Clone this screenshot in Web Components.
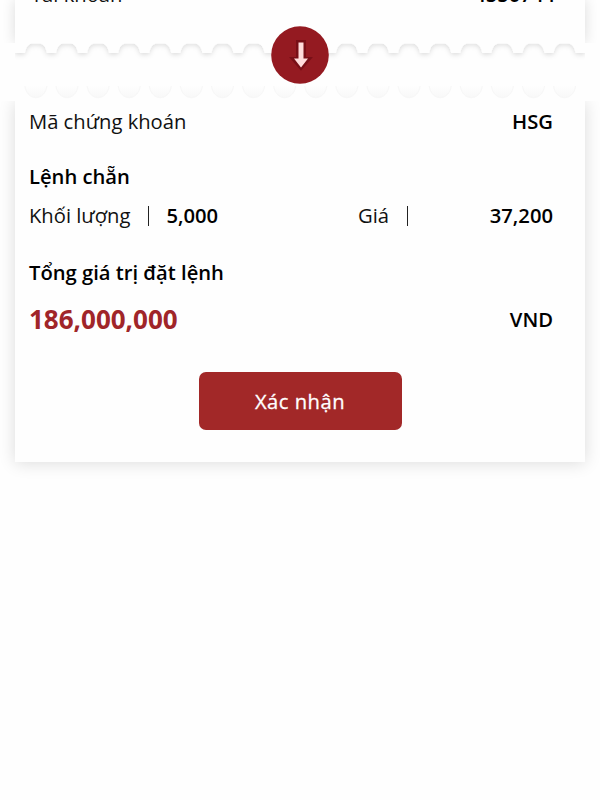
<!DOCTYPE html>
<html lang="vi">
<head>
<meta charset="utf-8">
<title>Xác nhận lệnh</title>
<style>
    body {
        margin: 0;
        height: 800px;
        overflow: hidden;
        background: #fefefe;
        color: #111;
        font-family: "Open Sans", "Noto Sans", sans-serif;
        font-size: 20.2px;
    }
</style>
</head>
<body>
<order-ticket>
    <ticket-row slot="account">
        <span>Tài khoản</span>
        <b slot="value">4550744</b>
    </ticket-row>
    <ticket-row>
        <span>Mã chứng khoán</span>
        <b slot="value">HSG</b>
    </ticket-row>
    <ticket-heading>Lệnh chẵn</ticket-heading>
    <order-quote>
        <span slot="volume-label">Khối lượng</span>
        <span slot="volume">5,000</span>
        <span slot="price-label">Giá</span>
        <span slot="price">37,200</span>
    </order-quote>
    <ticket-heading class="total">Tổng giá trị đặt lệnh</ticket-heading>
    <order-total>186,000,000<span slot="unit">VND</span></order-total>
    <confirm-button>Xác nhận</confirm-button>
</order-ticket>

<script>
class OrderTicket extends HTMLElement {
    constructor() {
        super();
        this.attachShadow({mode: 'open'});
        this.shadowRoot.innerHTML = `
            <style>
                :host {
                    display: block;
                    padding: 0 15px;
                }
                #account {
                    display: flow-root;
                    height: 43px;
                    padding: 0 30px 0 16px;
                    background: #fefefe;
                    box-shadow: 0 0 14px rgba(0,0,0,0.14);
                    clip-path: inset(0 -15px 0 -15px);
                }
                #account ::slotted(*) {
                    margin-top: -26px;
                }
                #body {
                    height: 361px;
                    padding: 0 32px 0 14px;
                    box-sizing: border-box;
                    background: #fefefe;
                    box-shadow: 0 1px 16px rgba(0,0,0,0.14);
                    clip-path: inset(0 -15px -25px -15px);
                }
            </style>
            <div id="account"><slot name="account"></slot></div>
            <ticket-tear></ticket-tear>
            <div id="body"><slot></slot></div>
        `;
    }
}
customElements.define('order-ticket', OrderTicket);

class TicketTear extends HTMLElement {
    constructor() {
        super();
        this.attachShadow({mode: 'open'});
        // one notch every 31.1px on both torn edges
        let upper = 'M0 -4 V10';
        let lower = '';
        for (let i = 0; i < 18; i++) {
            const x = 20.9 + i * 31.1;
            upper += ` L${x - 11} 10 C${x - 10} 4 ${x - 7} 0.5 ${x - 4} 0.5 H${x + 4} C${x + 7} 0.5 ${x + 10} 4 ${x + 11} 10`;
            lower += `M${x - 11} 43 C${x - 9} 58.5 ${x + 9} 58.5 ${x + 11} 43 `;
        }
        upper += ' H570 V-4 Z';
        this.shadowRoot.innerHTML = `
            <style>
                :host {
                    display: grid;
                    height: 58px;
                    justify-items: center;
                    align-items: start;
                }
                svg {
                    grid-area: 1 / 1;
                    display: block;
                    width: 570px;
                    height: 58px;
                }
                ticket-arrow {
                    grid-area: 1 / 1;
                    margin-top: -17px;
                }
            </style>
            <svg viewBox="0 0 570 58">
                <defs>
                    <filter id="soft" x="-5%" y="-20%" width="110%" height="250%">
                        <feDropShadow dx="0" dy="1.5" stdDeviation="2.4" flood-color="#000" flood-opacity="0.14"/>
                    </filter>
                    <linearGradient id="fade" x1="0" y1="43" x2="0" y2="55" gradientUnits="userSpaceOnUse">
                        <stop offset="0" stop-color="#fefefe"/>
                        <stop offset="1" stop-color="#f8f8f8"/>
                    </linearGradient>
                </defs>
                <path d="${upper}" fill="#fefefe" filter="url(#soft)"/>
                <path d="${lower}" fill="url(#fade)" stroke="#f7f7f7" stroke-width="1"/>
            </svg>
            <ticket-arrow></ticket-arrow>
        `;
    }
}
customElements.define('ticket-tear', TicketTear);

class TicketArrow extends HTMLElement {
    constructor() {
        super();
        this.attachShadow({mode: 'open'});
        this.shadowRoot.innerHTML = `
            <style>
                :host {
                    display: block;
                    width: 58px;
                    height: 58px;
                    z-index: 1;
                }
                svg { display: block; }
            </style>
            <svg width="58" height="58" viewBox="0 0 58 58">
                <circle cx="29" cy="29" r="28.8" fill="#941a21"/>
                <path d="M27.500 16.500 h5 v17 h4 L30 41 L23.500 33.500 h4 Z" fill="#780f17" stroke="#780f17" stroke-width="5"/>
                <path d="M27.500 16.500 h5 v16 h4.500 L30 41.500 L23 32.500 h4.500 Z" fill="#ffdcdc"/>
            </svg>
        `;
    }
}
customElements.define('ticket-arrow', TicketArrow);

class TicketRow extends HTMLElement {
    constructor() {
        super();
        this.attachShadow({mode: 'open'});
        this.shadowRoot.innerHTML = `
            <style>
                :host {
                    display: flex;
                    justify-content: space-between;
                    line-height: 28px;
                    padding-top: 6px;
                }
                ::slotted([slot="value"]) {
                    font-weight: 600;
                    color: #000;
                }
            </style>
            <slot></slot>
            <slot name="value"></slot>
        `;
    }
}
customElements.define('ticket-row', TicketRow);

class TicketHeading extends HTMLElement {
    constructor() {
        super();
        this.attachShadow({mode: 'open'});
        this.shadowRoot.innerHTML = `
            <style>
                :host {
                    display: block;
                    margin-top: 27px;
                    line-height: 28px;
                    font-weight: 600;
                    color: #000;
                }
                :host(.total) { margin-top: 29px; }
            </style>
            <slot></slot>
        `;
    }
}
customElements.define('ticket-heading', TicketHeading);

class OrderQuote extends HTMLElement {
    constructor() {
        super();
        this.attachShadow({mode: 'open'});
        this.shadowRoot.innerHTML = `
            <style>
                :host {
                    display: grid;
                    grid-template-columns: 329px 1fr;
                    margin-top: 11px;
                    line-height: 28px;
                }
                div { display: flex; }
                i {
                    width: 1px;
                    height: 20px;
                    margin: 5px 17px 0 18px;
                    background: #222;
                }
                ::slotted([slot="volume"]),
                ::slotted([slot="price"]) {
                    font-weight: 600;
                    color: #000;
                }
                ::slotted([slot="price"]) { margin-left: auto; }
            </style>
            <div><slot name="volume-label"></slot><i></i><slot name="volume"></slot></div>
            <div><slot name="price-label"></slot><i></i><slot name="price"></slot></div>
        `;
    }
}
customElements.define('order-quote', OrderQuote);

class OrderTotal extends HTMLElement {
    constructor() {
        super();
        this.attachShadow({mode: 'open'});
        this.shadowRoot.innerHTML = `
            <style>
                :host {
                    display: flex;
                    justify-content: space-between;
                    align-items: center;
                    margin-top: 15px;
                    line-height: 36px;
                }
                strong {
                    color: #a02529;
                    font-size: 26px;
                    font-weight: 700;
                }
                ::slotted(*) {
                    font-weight: 600;
                    color: #000;
                }
            </style>
            <strong><slot></slot></strong>
            <slot name="unit"></slot>
        `;
    }
}
customElements.define('order-total', OrderTotal);

class ConfirmButton extends HTMLElement {
    constructor() {
        super();
        this.attachShadow({mode: 'open'});
        this.shadowRoot.innerHTML = `
            <style>
                :host {
                    display: flex;
                    justify-content: center;
                    margin: 35px -18px 0 0;
                }
                button {
                    width: 203px;
                    height: 58px;
                    padding: 0;
                    border: 0;
                    border-radius: 7px;
                    background: #a22828;
                    color: #fff;
                    font: inherit;
                    font-weight: 500;
                    letter-spacing: 0.5px;
                    -webkit-text-stroke: 0.3px #fff;
                }
            </style>
            <button><slot></slot></button>
        `;
    }
}
customElements.define('confirm-button', ConfirmButton);
</script>
</body>
</html>
